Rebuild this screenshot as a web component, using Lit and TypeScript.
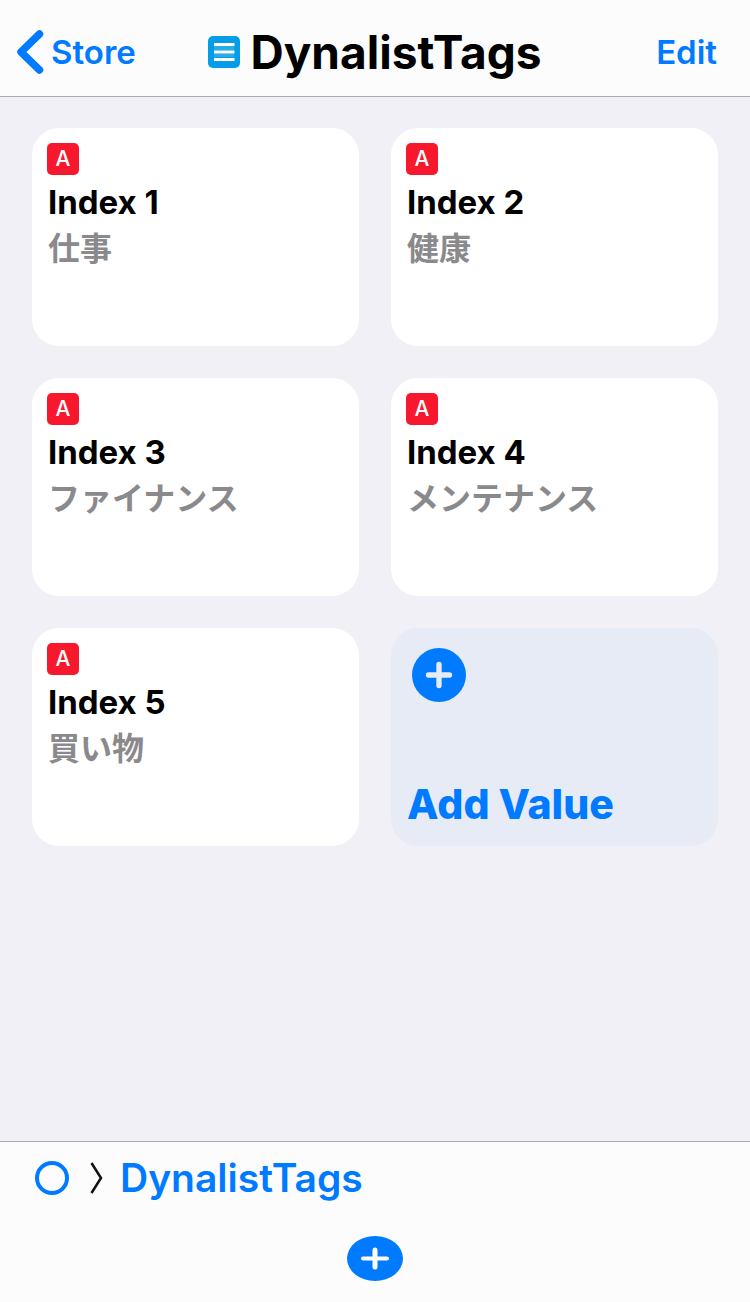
import { LitElement, html, css, svg } from "lit";
import { customElement, property, state } from "lit/decorators.js";

const plus = (w: number) => svg`<path d="M12 3v18M3 12h18" fill="none" stroke="currentColor" stroke-width=${w} stroke-linecap="round"/>`;

@customElement("value-card")
class ValueCard extends LitElement {
  @property() name = "";
  @property() value = "";

  static styles = css`
    :host { display: block; }
    .card {
      box-sizing: border-box;
      min-height: 218px;
      height: 100%;
      padding: 15px 16px 16px;
      border-radius: 27px;
      background: #fff;
    }
    .badge {
      display: flex;
      align-items: center;
      justify-content: center;
      width: 32px;
      height: 32px;
      margin-left: -1px;
      border-radius: 5px;
      background: #f7182d;
      color: #fff;
      font-size: 21px;
      line-height: 32px;
      font-weight: 500;
    }
    .name {
      margin: 7px 0 0;
      font-size: 33px;
      line-height: 40px;
      font-weight: 700;
      color: #000;
    }
    .value {
      margin: 1px 0 0;
      font-family: "Noto Sans CJK JP", sans-serif;
      font-size: 32px;
      line-height: 46px;
      font-weight: 700;
      color: #8a8a8d;
    }
  `;

  render() {
    return html`<article class="card">
      <span class="badge">A</span>
      <h2 class="name">${this.name}</h2>
      <p class="value" lang="ja">${this.value}</p>
    </article>`;
  }
}

@customElement("app-root")
class AppRoot extends LitElement {
  @state() values = ["仕事", "健康", "ファイナンス", "メンテナンス", "買い物"];

  static styles = css`
    :host {
      display: flex;
      flex-direction: column;
      min-height: 100vh;
      background: #f1f0f6;
      font-family: Inter, "Noto Sans CJK JP", sans-serif;
      color: #000;
    }
    button, a { font: inherit; color: #007aff; text-decoration: none; }
    button { border: 0; padding: 0; margin: 0; background: none; cursor: pointer; }
    svg { display: block; flex: none; }
    .top {
      display: grid;
      grid-template-columns: 1fr auto 1fr;
      align-items: center;
      padding: 8px 33px 0 16px;
      min-height: 88px;
      background: #fcfcfc;
      border-bottom: 1px solid #a9a9af;
    }
    .back, .edit { font-size: 33px; line-height: 40px; font-weight: 600; }
    .back { display: flex; align-items: center; gap: 7px; justify-self: start; }
    .edit { justify-self: end; }
    .heading { display: flex; align-items: center; gap: 10px; padding-left: 17px; }
    .title { margin: 0; font-size: 46px; line-height: 56px; font-weight: 700; }
    .grid {
      flex: 1;
      display: grid;
      grid-template-columns: repeat(2, minmax(0, 1fr));
      align-content: start;
      gap: 32px;
      padding: 31px 32px;
    }
    .add {
      display: flex;
      flex-direction: column;
      align-items: flex-start;
      justify-content: space-between;
      min-height: 218px;
      padding: 20px 16px 17px;
      border-radius: 27px;
      background: #e7ebf6;
      font-size: 41px;
      line-height: 50px;
      font-weight: 800;
    }
    .disc {
      display: flex;
      align-items: center;
      justify-content: center;
      border-radius: 50%;
      background: #007aff;
      color: #fff;
    }
    .disc.large { width: 54px; height: 54px; margin-left: 5px; color: #e7ebf6; }
    .disc.wide { width: 56px; height: 45px; }
    .bottom {
      display: flex;
      flex-direction: column;
      align-items: center;
      gap: 34px;
      padding: 11px 35px 21px;
      background: #fcfcfc;
      border-top: 1px solid #a9a9a9;
    }
    .crumbs {
      align-self: stretch;
      display: flex;
      align-items: center;
      font-size: 39px;
      line-height: 49px;
      font-weight: 600;
    }
    .sep { margin: 0 17px 0 21px; }
  `;

  render() {
    return html`
      <header class="top">
        <a class="back" href="#store">
          <svg width="28" height="44" viewBox="0 0 28 44" aria-hidden="true">
            <path d="M23.500 4L5 22l18.500 18" fill="none" stroke="currentColor" stroke-width="7.500" stroke-linecap="round" stroke-linejoin="round"/>
          </svg>Store</a>
        <div class="heading">
          <svg width="32" height="32" viewBox="0 0 32 32" aria-hidden="true">
            <rect width="32" height="32" rx="5" fill="#059de9"/>
            <path d="M6 10h20v4H6zM6 18h20v3H6z" fill="#2aabea"/>
            <path d="M6 8.500h20.500M6 16h20.500M6 23.500h20.500" stroke="#fff" stroke-width="3"/>
          </svg>
          <h1 class="title">DynalistTags</h1>
        </div>
        <button class="edit" type="button">Edit</button>
      </header>
      <main class="grid">
        ${this.values.map((v, i) => html`<value-card name=${`Index ${i + 1}`} value=${v}></value-card>`)}
        <button class="add" type="button">
          <span class="disc large"><svg width="28" height="28" viewBox="0 0 24 24" aria-hidden="true">${plus(4.6)}</svg></span>
          <span>Add Value</span>
        </button>
      </main>
      <footer class="bottom">
        <nav class="crumbs" aria-label="Breadcrumb">
          <a href="#root" aria-label="Root">
            <svg width="34" height="34" viewBox="0 0 34 34"><circle cx="17" cy="17" r="15" fill="none" stroke="currentColor" stroke-width="4"/></svg>
          </a>
          <svg class="sep" width="13" height="32" viewBox="0 0 13 32" aria-hidden="true">
            <path d="M1.500 1l9.500 15L1.500 31" fill="none" stroke="#111" stroke-width="2.500"/>
          </svg>
          <a href="#tags">DynalistTags</a>
        </nav>
        <button class="disc wide" type="button" aria-label="Add">
          <svg width="28" height="23" viewBox="0 0 28 23" aria-hidden="true">
            <path d="M2 11.500h24" stroke="currentColor" stroke-width="4" stroke-linecap="round"/>
            <path d="M14 3v17" stroke="currentColor" stroke-width="5" stroke-linecap="round"/>
          </svg>
        </button>
      </footer>`;
  }
}
